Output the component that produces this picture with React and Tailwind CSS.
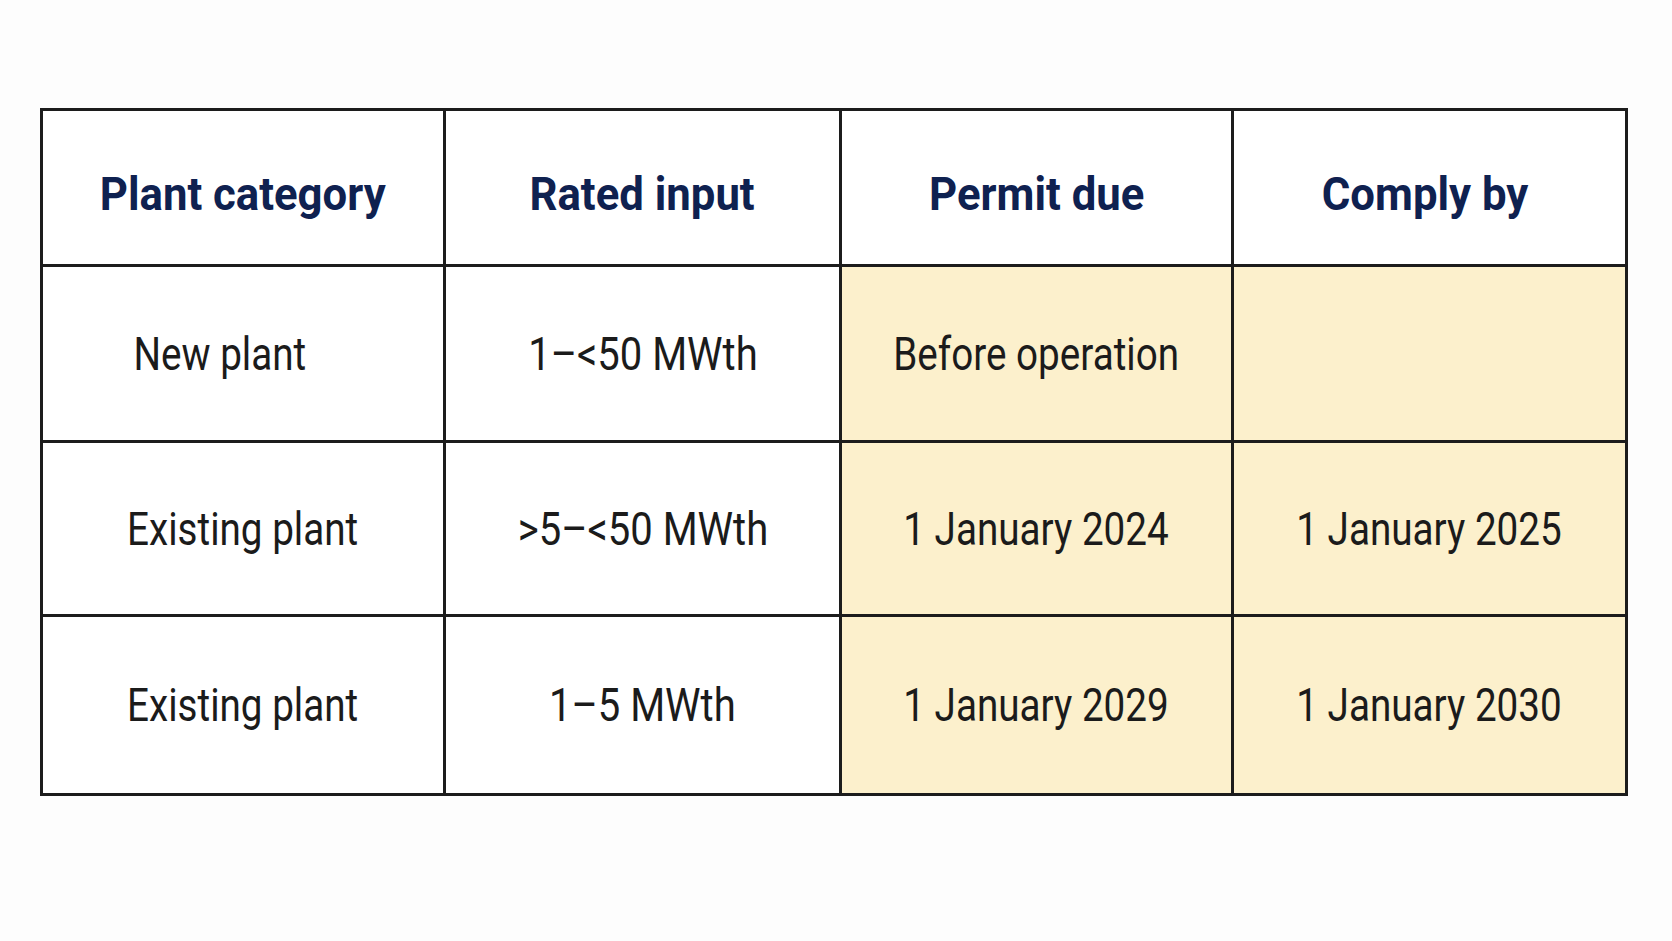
import React from 'react';

const rows = [
    { category: 'New plant', input: '1–<50 MWth', permit: 'Before operation', comply: '', shift: true },
    { category: 'Existing plant', input: '>5–<50 MWth', permit: '1 January 2024', comply: '1 January 2025' },
    { category: 'Existing plant', input: '1–5 MWth', permit: '1 January 2029', comply: '1 January 2030' },
];

const heights = ['h-[176px]', 'h-[174px]', 'h-[176px]'];

function Head ({ children, last, extra = '' })
{
    return (
        <div className={ `flex items-center justify-center pt-[12px] h-[156px] bg-white border-b-[3px] border-[#1c1c1c] ${ last ? '' : 'border-r-[3px]' } ${ extra }` }>
            <span className="inline-block scale-x-[0.93] text-[47px] leading-none font-bold text-[#0f2150] whitespace-nowrap">
                { children }
            </span>
        </div>
    );
}

function Cell ({ children, yellow, last, bottom, h, wide, extra = '' })
{
    return (
        <div className={ `flex items-center justify-center ${ h } ${ yellow ? 'bg-[#fcf0cc]' : 'bg-white' } border-[#1c1c1c] ${ last ? '' : 'border-r-[3px]' } ${ bottom ? '' : 'border-b-[3px]' } ${ extra }` }>
            <span className={ `inline-block ${ wide ? 'scale-x-[0.87]' : 'scale-x-[0.84]' } text-[46px] leading-none text-[#1b1b1b] whitespace-nowrap` }>
                { children }
            </span>
        </div>
    );
}

export default function App ()
{
    return (
        <div className="w-[1672px] h-[941px] bg-[#fdfdfd] pt-[108px] pl-[40px] font-['Roboto',sans-serif]">
            <div className="w-[1588px] border-[3px] border-[#1c1c1c] grid grid-cols-[403px_396px_392px_391px]">
                <Head>Plant category</Head>
                <Head>Rated input</Head>
                <Head>Permit due</Head>
                <Head last extra="pr-[8px]">Comply by</Head>
                { rows.map((r, i) => {
                    const bottom = i === rows.length - 1;
                    const h = heights[i];
                    return (
                        <React.Fragment key={ i }>
                            <Cell h={ h } bottom={ bottom } extra={ r.shift ? 'pr-[46px]' : '' }>{ r.category }</Cell>
                            <Cell h={ h } bottom={ bottom } wide>{ r.input }</Cell>
                            <Cell h={ h } bottom={ bottom } yellow>{ r.permit }</Cell>
                            <Cell h={ h } bottom={ bottom } yellow last>{ r.comply }</Cell>
                        </React.Fragment>
                    );
                }) }
            </div>
        </div>
    );
}
